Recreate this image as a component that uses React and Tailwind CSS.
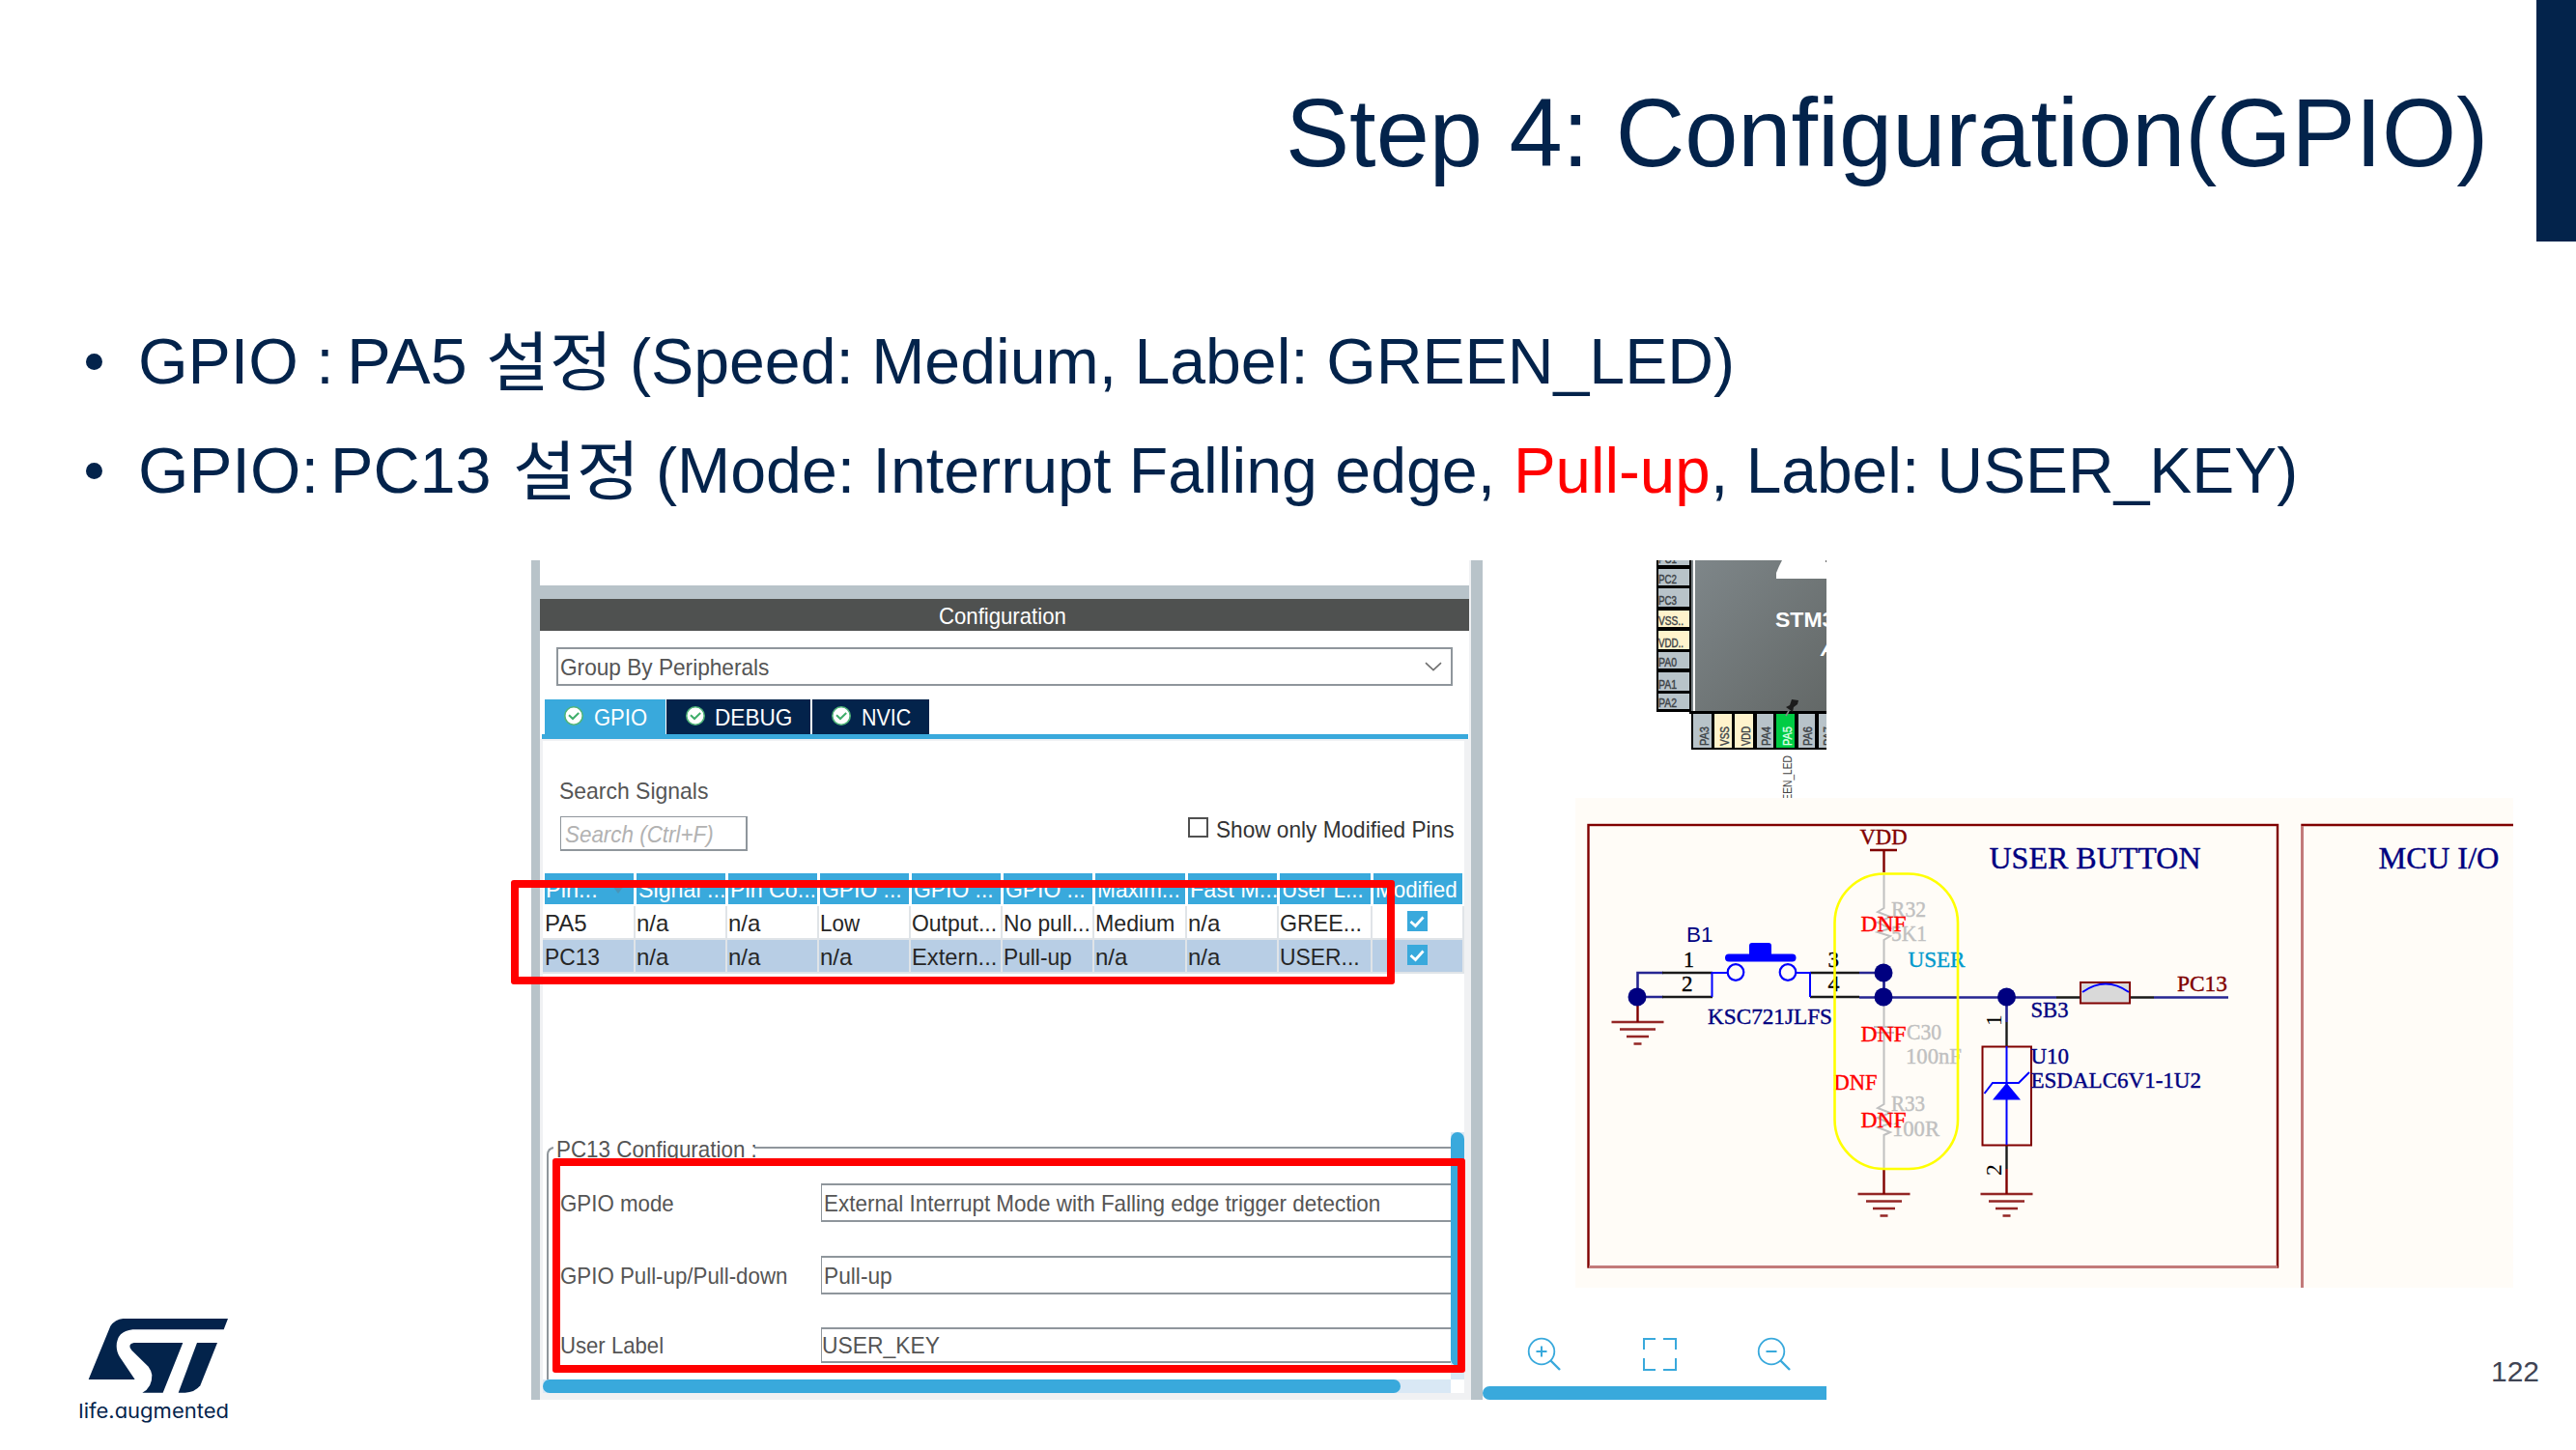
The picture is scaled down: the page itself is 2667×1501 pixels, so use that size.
import { useLayoutEffect, useRef, useState } from "react";

const NAVY = "#03234b";

// One run of text stretched or squeezed horizontally to a set advance width.
function Fit({ w, className = "", children }) {
  const ref = useRef(null);
  const [k, setK] = useState(1);
  useLayoutEffect(() => {
    setK(w / ref.current.offsetWidth);
  }, [w]);
  return (
    <span className={"inline-block whitespace-pre shrink-0 " + className} style={{ width: w }}>
      <span ref={ref} className="inline-block origin-left" style={{ transform: `scaleX(${k})` }}>
        {children}
      </span>
    </span>
  );
}

function Title() {
  return (
    <header className="flex h-[250px] justify-end">
      <h1 className="mt-[80px] mr-[50px] text-[100px] leading-[114px] text-[#03234b]">
        <Fit w={1245}>Step 4: Configuration(GPIO)</Fit>
      </h1>
      <div className="w-[41px] bg-[#03234b]" />
    </header>
  );
}

function Bullets() {
  return (
    <ul className="flex flex-col text-[67px] leading-[113px] text-[#03234b]">
      <li className="flex h-[113px] items-center">
        <span className="ml-[89px] mr-[37px] mt-px size-[17px] rounded-full bg-[#03234b]" />
        <Fit w={203}>GPIO :</Fit>
        <Fit w={125} className="ml-[13px]">PA5</Fit>
        <Fit w={131} className="-mt-[8px] ml-[19px] font-['Noto_Sans_CJK_KR',sans-serif]">설정</Fit>
        <Fit w={1144} className="ml-[18px]">(Speed: Medium, Label: GREEN_LED)</Fit>
      </li>
      <li className="flex h-[113px] items-center">
        <span className="ml-[89px] mr-[37px] mt-px size-[17px] rounded-full bg-[#03234b]" />
        <Fit w={187}>GPIO:</Fit>
        <Fit w={167} className="ml-[12px]">PC13</Fit>
        <Fit w={131} className="-mt-[8px] ml-[22px] font-['Noto_Sans_CJK_KR',sans-serif]">설정</Fit>
        <Fit w={888} className="ml-[17px]">{"(Mode: Interrupt Falling edge, "}</Fit>
        <Fit w={204} className="text-[#ff0000]">Pull-up</Fit>
        <Fit w={608}>{", Label: USER_KEY)"}</Fit>
      </li>
    </ul>
  );
}

function OkIcon() {
  return (
    <svg viewBox="0 0 20 20" className="size-[20px]">
      <circle cx="10" cy="10" r="9.2" fill="#fff" stroke="#4fb477" strokeWidth="1.6" />
      <path d="M5 9.2 L9 13 L15.2 7" fill="none" stroke="#3fae6a" strokeWidth="2" />
    </svg>
  );
}

function Check() {
  return (
    <svg viewBox="0 0 21 21" className="size-[21px]">
      <rect width="21" height="21" fill="#39a9dc" />
      <path d="M3.5 11 L8.5 15.5 L16.5 6.5" fill="none" stroke="#fff" strokeWidth="2.8" />
    </svg>
  );
}

const HEAD = [["Pin...", 54], ["Signal ...", 90], ["Pin Co...", 89], ["GPIO ...", 83], ["GPIO ...", 83], ["GPIO ...", 83], ["Maxim...", 86], ["Fast M...", 91], ["User L...", 85], ["Modified", 85]];
const ROWS = [
  { sel: false, cells: [["PA5", 44], ["n/a", 33], ["n/a", 33], ["Low", 41], ["Output...", 88], ["No pull...", 90], ["Medium", 82], ["n/a", 33], ["GREE...", 85]] },
  { sel: true, cells: [["PC13", 57], ["n/a", 33], ["n/a", 33], ["n/a", 33], ["Extern...", 88], ["Pull-up", 71], ["n/a", 33], ["n/a", 33], ["USER...", 83]] },
];
const COLS = "grid grid-cols-[96px_95px_95px_95px_95px_95px_96px_95px_97px_95px]";

function PinTable() {
  return (
    <div className="mt-[23px] text-[24px] text-[#262626]">
      <div className={COLS + " h-[34px] text-white"}>
        {HEAD.map(([t, w], i) => (
          <div key={i} className={(i === 0 ? "ml-[2px] pl-[1px] " : "ml-[1px] pl-[2px] ") + "mr-[2px] h-[32px] bg-[#39a9dc] leading-[33px] relative"}>
            <Fit w={w}>{t}</Fit>
            {i === 0 && <span className="absolute left-[70px] top-[13px] border-x-[6px] border-t-[8px] border-x-transparent border-t-[#4a94b8]" />}
          </div>
        ))}
      </div>
      {ROWS.map((r, j) => (
        <div key={j} className={COLS + " h-[35px] border-b-2 border-[#e0e4e8] " + (r.sel ? "bg-[#b8cee5]" : "bg-white")}>
          {r.cells.map(([t, w], i) => (
            <div key={i} className={"border-r-2 border-[#e0e4e8] leading-[35px] " + (i === 0 ? "pl-[2px]" : "pl-[1px]")}>
              <Fit w={w}>{t}</Fit>
            </div>
          ))}
          <div className="flex items-start border-r-2 border-[#e0e4e8] pl-[36px] pt-[5px]">
            <Check />
          </div>
        </div>
      ))}
    </div>
  );
}

function Field({ label, lw, value, vw, cls, pad }) {
  return (
    <div className={"flex items-center " + cls}>
      <div className="w-[270px] shrink-0 pt-px">
        <Fit w={lw}>{label}</Fit>
      </div>
      <div className={"flex h-full flex-1 items-center border-y-2 border-l border-[#8f969c] pt-px " + pad}>
        <Fit w={vw}>{value}</Fit>
      </div>
    </div>
  );
}

function Panel() {
  return (
    <section className="relative flex h-[869px] w-[985px] border-l-[9px] border-r-[12px] border-[#b8c3c9] text-[24px] text-[#555]">
      <div className="flex w-[962px] flex-col bg-white">
        <div className="h-[26px]" />
        <div className="h-[14px] bg-[#b8c3c9]" />
        <div className="flex h-[33px] justify-center bg-[#4f5150] leading-[36px] text-white">
          <Fit w={132} className="-ml-[4px]">Configuration</Fit>
        </div>
        <div className="mx-[17px] mt-[17px] flex h-[40px] items-center justify-between border-2 border-[#8f969c] pl-[2px] pr-[9px]">
          <Fit w={216} className="mt-px">Group By Peripherals</Fit>
          <svg viewBox="0 0 18 10" className="h-[10px] w-[18px]"><path d="M1 1.2 L9 8.6 L17 1.2" fill="none" stroke="#707070" strokeWidth="1.6" /></svg>
        </div>
        <nav className="mt-[14px] flex h-[36px] pl-[5px] text-white">
          <div className="mr-px flex w-[125px] items-center bg-[#39a9dc] pl-[20px]"><div className="-mt-[3px]"><OkIcon /></div><Fit w={55} className="ml-[11px] mt-[2px]">GPIO</Fit></div>
          <div className="mr-[2px] flex w-[149px] items-center bg-[#03234b] pl-[20px]"><div className="-mt-[3px]"><OkIcon /></div><Fit w={80} className="ml-[10px] mt-[2px]">DEBUG</Fit></div>
          <div className="flex w-[121px] items-center bg-[#03234b] pl-[20px]"><div className="-mt-[3px]"><OkIcon /></div><Fit w={51} className="ml-[11px] mt-[2px]">NVIC</Fit></div>
        </nav>
        <div className="ml-[2px] mr-[1px] h-[5px] bg-[#39a9dc]" />
        <div className="h-[684px] border-b-[7px] border-l-[3px] border-r-[5px] border-t-2 border-[#f0f1f3]">
          <div className="pl-[17px] pt-[38px] leading-[27px]"><Fit w={154} className="h-[27px]">Search Signals</Fit></div>
          <div className="mt-[11px] flex h-[38px] pl-[18px]">
            <div className="mt-[2px] flex h-[36px] w-[194px] items-center border border-b-2 border-r-2 border-[#8f969c] pl-[4px] italic text-[#b2b2b2]">
              <Fit w={154} className="mt-[2px]">Search (Ctrl+F)</Fit>
            </div>
            <div className="ml-[456px] mt-[3px] size-[21px] border-2 border-[#505050]" />
            <Fit w={246} className="-mt-[2px] ml-[8px] text-[#333]">Show only Modified Pins</Fit>
          </div>
          <PinTable />
          <div className="mt-[164px] flex h-[256px]">
            <div className="relative ml-[4px] w-[936px]">
              <div className="mt-[15px] h-[241px] rounded-tl-[8px] border-l-2 border-t-2 border-[#8f969c]" />
              <Fit w={208} className="absolute left-[7px] top-0 bg-white px-[3px] leading-[36px]">PC13 Configuration :</Fit>
              <div className="absolute inset-x-0 top-[53px] pl-[14px]">
                <Field cls="h-[40px]" pad="pl-[2px]" label="GPIO mode" lw={118} value="External Interrupt Mode with Falling edge trigger detection" vw={576} />
                <Field cls="mt-[35px] h-[40px]" pad="pl-[2px]" label="GPIO Pull-up/Pull-down" lw={235} value="Pull-up" vw={71} />
                <Field cls="mt-[34px] h-[37px]" pad="" label="User Label" lw={107} value="USER_KEY" vw={122} />
              </div>
            </div>
            <div className="w-[14px] bg-[#d9e8f5]"><div className="h-[242px] rounded-full bg-[#39a9dc]" /></div>
          </div>
          <div className="h-[14px] w-[940px] bg-[#d9e8f5]"><div className="h-[14px] w-[888px] rounded-full bg-[#39a9dc]" /></div>
        </div>
      </div>
      <div className="w-[2px] bg-[#f0f1f3]" />
      <div className="absolute left-[-30px] top-[331px] h-[108px] w-[915px] rounded-[3px] border-[8.5px] border-[#ff0000]" />
      <div className="absolute left-[13px] top-[619px] h-[222px] w-[945px] rounded-[3px] border-[8.5px] border-[#ff0000]" />
    </section>
  );
}

const SIDE_PINS = [["PC1", 576, 9, 0], ["PC2", 589, 17, 0], ["PC3", 609, 19, 0], ["VSS..", 632, 17, 1], ["VDD..", 653, 19, 1], ["PA0", 675, 17, 0], ["PA1", 696, 19, 0], ["PA2", 718, 16, 0]];
const BASE_PINS = [["PA3", 1753, 19, "#b8c3c9"], ["VSS", 1775, 18, "#fff3cc"], ["VDD", 1796, 19, "#fff3cc"], ["PA4", 1819, 17, "#b8c3c9"], ["PA5", 1839, 19, "#00cc44"], ["PA6", 1862, 17, "#b8c3c9"], ["PA7", 1883, 17, "#b8c3c9"]];

function Chip() {
  return (
    <svg viewBox="1715 580 176 246" className="ml-[180px] h-[246px] w-[176px] font-['Liberation_Sans',sans-serif]">
      <defs>
        <linearGradient id="die" x1="0" y1="0" x2="1" y2="1">
          <stop offset="0" stopColor="#7e8689" />
          <stop offset="1" stopColor="#636867" />
        </linearGradient>
      </defs>
      <rect x="1715" y="580" width="38" height="157" fill="#000" />
      {SIDE_PINS.map(([t, y, h, p]) => (
        <g key={t}>
          <rect x="1717" y={y} width="32" height={h} fill={p ? "#fff3cc" : "#b8c3c9"} />
          <text x="1717" y={y + h - 2} fontSize="12" fill="#3c4246" stroke="#3c4246" strokeWidth="0.4" textLength={p ? 26 : 19} lengthAdjust="spacingAndGlyphs">{t}</text>
        </g>
      ))}
      <rect x="1751" y="580" width="2" height="156" fill="#7e8689" />
      <rect x="1753" y="580" width="2" height="156" fill="#fff" />
      <rect x="1755" y="580" width="136" height="156" fill="url(#die)" />
      <path d="M1845 580 L1842 586 L1839 593 V599 H1891 V580 Z" fill="#fff" />
      <path d="M1890 580h1v2h-1z" fill="#666" />
      <text x="1838" y="649" fontSize="21.5" fontWeight="bold" fill="#fff" textLength="101" lengthAdjust="spacingAndGlyphs">STM32F4</text>
      <text x="1885" y="679" fontSize="22" fontWeight="bold" fontStyle="italic" fill="#fff">A</text>
      <path d="M1750 736 H1891 V776 H1751 V739 H1749 V736Z" fill="#000" />
      {BASE_PINS.map(([t, x, w, c]) => (
        <g key={t}>
          <rect x={x} y="739" width={w} height="35" fill={c} />
          <text transform={`translate(${x + w - 3} 772) rotate(-90)`} fontSize="12" fill={t === "PA5" ? "#d8ffe4" : "#3c4246"} stroke={t === "PA5" ? "#d8ffe4" : "#3c4246"} strokeWidth="0.4" textLength="20" lengthAdjust="spacingAndGlyphs">{t}</text>
        </g>
      ))}
      <path d="M1849 741 L1852 736" stroke="#888" strokeWidth="1.6" />
      <path d="M1849 732 L1853 730 L1855 724 L1862 725 L1861 729 L1857 732 L1856 737 Z" fill="#1c1c1c" />
      <text transform="translate(1855 844) rotate(-90)" fontSize="12" fill="#444" textLength="62" lengthAdjust="spacingAndGlyphs">GREEN_LED</text>
    </svg>
  );
}

function Magnifier({ plus }) {
  return (
    <svg viewBox="0 0 36 36" className="size-[36px]" fill="none" stroke="#39a9dc" strokeWidth="1.8">
      <circle cx="15" cy="15" r="13.3" />
      <path d="M24.5 24.5 L34 34" strokeWidth="2.4" />
      <path d={plus ? "M9.5 15 H20.5 M15 9.5 V20.5" : "M9.5 15 H20.5"} strokeWidth="2" />
    </svg>
  );
}

function PinView() {
  return (
    <section className="flex w-[356px] flex-col">
      <Chip />
      <div className="mt-[558px] flex h-[36px] items-center gap-[83px] pl-[46px]">
        <Magnifier plus />
        <svg viewBox="0 0 36 36" className="size-[36px]" fill="none" stroke="#39a9dc" strokeWidth="2">
          <path d="M14 2 H2 V13 M22 2 H35 V13 M2 22 V34 H14 M22 34 H35 V22" />
        </svg>
        <Magnifier />
      </div>
      <div className="mt-[15px] h-[14px] rounded-l-full bg-[#39a9dc]" />
    </section>
  );
}

const DR = "#800000";
const NB = "#000080";
const GR = "#c0c0c0";

function T({ x, y, w, c, s = 23.5, children }) {
  return <text x={x} y={y} fontSize={s} fill={c} stroke={c} strokeWidth="0.4" textLength={w} lengthAdjust="spacingAndGlyphs">{children}</text>;
}

function Ground({ x, y }) {
  return (
    <path d={`M${x - 27} ${y}H${x + 27}M${x - 18.5} ${y + 7.5}H${x + 18.5}M${x - 11.5} ${y + 15}H${x + 11.5}M${x - 4} ${y + 22.5}H${x + 4}`} stroke={DR} strokeWidth="2.6" fill="none" opacity="0.85" />
  );
}

function Schematic() {
  return (
    <svg viewBox="1631 826 971 507" className="absolute left-[1631px] top-[826px] h-[507px] w-[971px] bg-[#fffcf7] font-['Liberation_Serif',serif]">
      <g fill="none" strokeWidth="2.4">
        <rect x="1644.5" y="854" width="713.5" height="457.5" stroke={DR} strokeWidth="2.4" />
        <path d="M2383.500 1333 V854 H2602" stroke={DR} strokeWidth="2.4" />
        <path d="M1645 1311.5 H2358 M2383.5 855V1333" stroke="#c27a7a" strokeWidth="3" />
        <path d="M1936 880 H1964 M1950.5 880 V903 M1950.5 1210 V1236 M2077.5 1210 V1236 M1695.5 1040 V1058" stroke={DR} />
        <path d="M1950.5 904 V940 L1944 944 L1957 949 L1944 955 L1957 961 L1944 965 L1957 969 L1950.5 973 V1063 M1940 1063 H1961 M1940 1069 H1961 M1950.5 1069 V1143 L1944 1147 L1957 1152 L1944 1157 L1957 1163 L1944 1167 L1957 1172 L1950.5 1175 V1210" stroke={GR} strokeWidth="2" />
        <path d="M1722 1007 H1695.5 V1032 H1722 M1925 1007 H1950.5 V1032 M1925 1032.5 H2129 M2077.5 1032 V1058 M2230 1032.5 H2307" stroke={NB} strokeWidth="2.6" opacity="0.85" />
        <path d="M1721 1007 H1773 M1721 1032 H1773 M1874 1007 H1925 M1874 1032 H1925 M2129 1032.5 H2153 M2205 1032.5 H2230 M2077.5 1058 V1083 M2077.5 1185 V1210" stroke="#1a1a1a" />
        <path d="M1772.5 1032 V1007 H1788 M1860 1007 H1874 V1032" stroke="#0000ff" strokeWidth="2" />
        <circle cx="1797" cy="1006.5" r="8.3" stroke="#0000ff" strokeWidth="2.2" />
        <circle cx="1851" cy="1006.5" r="8.3" stroke="#0000ff" strokeWidth="2.2" />
      </g>
      <rect x="1786" y="987.5" width="73.5" height="8" rx="4" fill="#0000ff" />
      <path d="M1811 989 V979 Q1811 976 1814 976 H1831 Q1834 976 1834 979 V989Z" fill="#0000ff" />
      {[[1695, 1032], [1950, 1007], [1950, 1032], [2077.5, 1032]].map(([x, y]) => (
        <circle key={x + "-" + y} cx={x} cy={y} r="9.5" fill={NB} />
      ))}
      <Ground x={1695.5} y={1058} />
      <Ground x={1950.5} y={1236} />
      <Ground x={2077.5} y={1236} />
      <rect x="2052.5" y="1083.5" width="50.5" height="102" fill="none" stroke={DR} strokeWidth="2" />
      <path d="M2077.5 1083 V1185 M2054.5 1132 L2063 1121 H2090 L2101 1110" fill="none" stroke="#0000ff" strokeWidth="2" />
      <path d="M2077.5 1121 L2092 1138.5 H2063Z" fill="#0000ff" />
      <rect x="2154" y="1017" width="51" height="21.5" fill="#d9d9d9" stroke={DR} strokeWidth="2" />
      <path d="M2156 1027 Q2180 1010 2204 1027" fill="none" stroke="#0000ff" strokeWidth="2" />

      <T x={1958} y={948.5} w={36} c={GR}>R32</T>
      <T x={1958} y={973.5} w={37} c={GR}>5K1</T>
      <T x={1974} y={1075.5} w={36} c={GR}>C30</T>
      <T x={1973} y={1100.5} w={58} c={GR}>100nF</T>
      <T x={1958} y={1150} w={35} c={GR}>R33</T>
      <T x={1959} y={1175.5} w={49} c={GR}>100R</T>
      <T x={1926.5} y={964} w={47} c="#ff0000">DNF</T>
      <T x={1926.5} y={1077.5} w={47} c="#ff0000">DNF</T>
      <T x={1898.5} y={1127.5} w={45} c="#ff0000">DNF</T>
      <T x={1926.5} y={1167} w={47} c="#ff0000">DNF</T>
      <T x={1925.5} y={873.5} w={49} c={DR}>VDD</T>
      <T x={1975.5} y={1001} w={59} c="#0099cc">USER</T>
      <T x={1743} y={1001} w={11} c="#000">1</T>
      <T x={1741} y={1025.5} w={11.5} c="#000">2</T>
      <T x={1892.5} y={1001} w={11.5} c="#000">3</T>
      <T x={1892.5} y={1025.5} w={12} c="#000">4</T>
      <T x={1768} y={1060} w={129} c={NB}>KSC721JLFS</T>
      <T x={2059.5} y={899} w={219} c={NB} s={31}>USER BUTTON</T>
      <T x={2462.5} y={899} w={125} c={NB} s={31}>MCU I/O</T>
      <T x={2102.5} y={1053} w={39} c={NB}>SB3</T>
      <T x={2102.5} y={1100.5} w={39.5} c={NB}>U10</T>
      <T x={2102.5} y={1125.5} w={176.5} c={NB}>ESDALC6V1-1U2</T>
      <T x={2254} y={1026} w={52} c={DR}>PC13</T>
      <text x="1746" y="975" fontSize="22.5" fill={NB} className="font-['Liberation_Sans',sans-serif]">B1</text>
      <text transform="translate(2072 1062) rotate(-90)" fontSize="23.5">1</text>
      <text transform="translate(2072 1217) rotate(-90)" fontSize="23.5">2</text>
      <rect x="1899.5" y="904.5" width="127.5" height="305.5" rx="51" fill="none" stroke="#ffff00" strokeWidth="2.6" />
    </svg>
  );
}

function Logo() {
  return (
    <svg viewBox="0 0 600 450" className="h-[150px] w-[200px]" fill={NAVY}>
      <path d="M95 264 L163 98 Q178 77 202 75 H528 L515 109 H232 Q183 114 182 160 Q182 180 192 194 L239 264 Z" />
      <path d="M236 150 H388 L326 305 H262 Q293 290 292 250 Q290 236 281 224 L229 173 Q214 155 236 150Z" />
      <path d="M432 150 H495 L442 283 Q424 305 395 305 H374Z" />
      <text x="64" y="385" fontSize="61" textLength="467" lengthAdjust="spacingAndGlyphs" className="font-['Inter',sans-serif] [font-feature-settings:'cv11']">life.augmented</text>
    </svg>
  );
}

export default function App() {
  return (
    <main className="relative flex h-[1501px] w-[2667px] flex-col overflow-hidden bg-white font-['Liberation_Sans',Arial,sans-serif]">
      <Title />
      <div className="h-[330px] pt-[67px]">
        <Bullets />
      </div>
      <div className="flex h-[869px]">
        <div className="flex w-[550px] items-end pl-[60px]">
          <div className="-mb-[41px]"><Logo /></div>
        </div>
        <Panel />
        <PinView />
        <div className="flex flex-1 items-end justify-end pr-[38px] text-[30px] leading-[34px] text-[#3f4454]">
          <Fit w={50} className="mb-[12px]">122</Fit>
        </div>
      </div>
      <Schematic />
    </main>
  );
}
